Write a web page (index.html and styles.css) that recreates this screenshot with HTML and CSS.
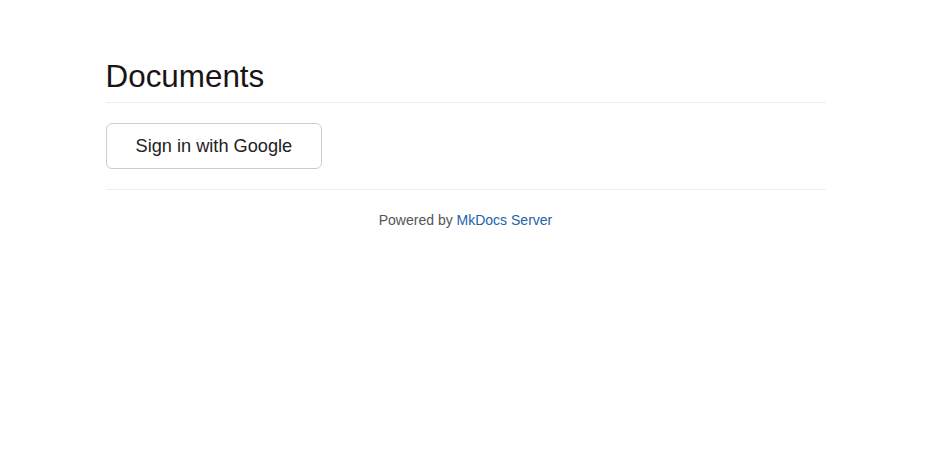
FILE: index.html
```html
<!DOCTYPE html>
<html>
<head>
<meta charset="utf-8">
<link rel="stylesheet" href="styles.css">
</head>
<body>
<div class="container">
  <div class="page-header">
    <h1 class="title">Documents</h1>
  </div>
  <a class="btn" href="#">Sign in with Google</a>
  <hr class="rule">
  <p class="footer">Powered by <a class="link" href="#">MkDocs Server</a></p>
</div>
</body>
</html>
```
FILE: styles.css
```css
html, body {
  margin: 0;
  padding: 0;
  background: #fff;
}
body {
  font-family: "Liberation Sans", Arial, sans-serif;
  font-size: 14px;
  line-height: 20px;
  color: #333;
}
.container {
  width: 720px;
  margin: 0 auto;
  padding: 0 15px;
}
.page-header {
  margin: 0 0 20px;
  padding-top: 60px;
  padding-bottom: 9px;
  border-bottom: 1px solid #eee;
}
.title {
  margin: 0;
  font-size: 31.4px;
  line-height: 33px;
  font-weight: 500;
  color: #1a1414;
}
.btn {
  display: inline-block;
  padding: 10px 29px;
  font-size: 18.2px;
  line-height: 24px;
  color: #222;
  text-decoration: none;
  border: 1px solid #ccc;
  border-radius: 6px;
  background: #fff;
}
.rule {
  margin: 20px 0;
  border: 0;
  border-top: 1px solid #eee;
}
.footer {
  margin: 0;
  text-align: center;
  color: #555;
}
.link {
  color: #2263a8;
  text-decoration: none;
}
```
